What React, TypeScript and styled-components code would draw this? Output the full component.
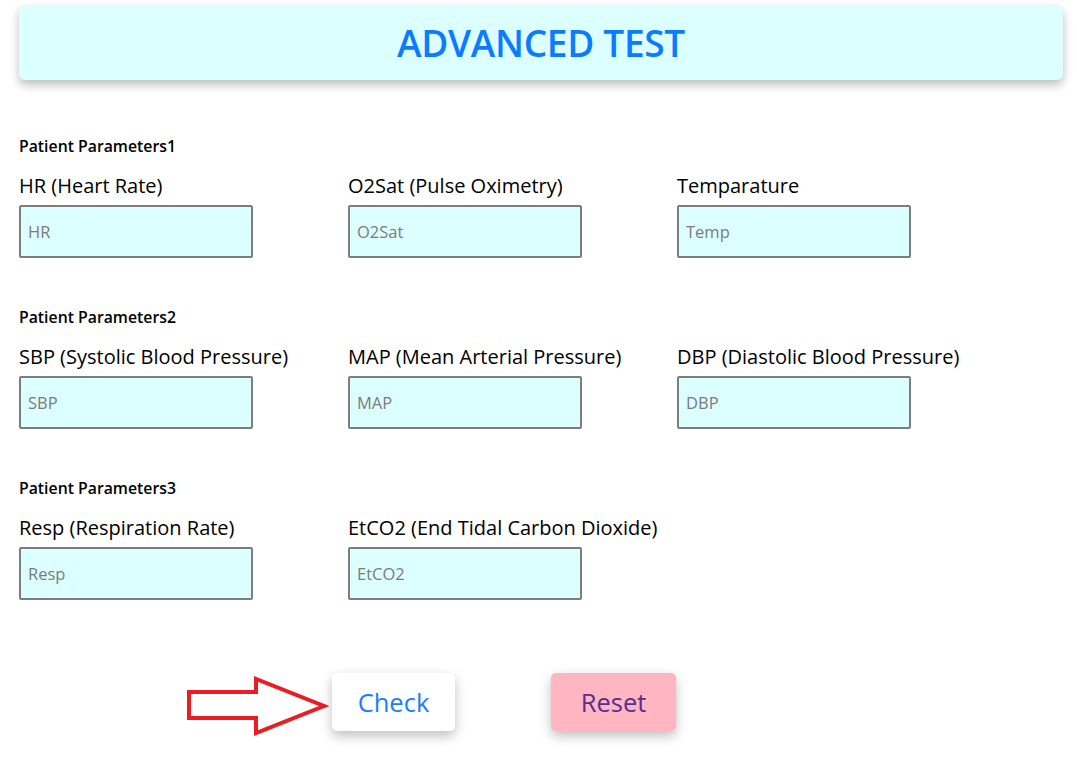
import React from 'react';
import styled, { createGlobalStyle } from 'styled-components';

const GlobalStyle = createGlobalStyle`
  html, body {
    margin: 0;
    padding: 0;
    background: #ffffff;
    font-family: "Open Sans", "Noto Sans", Arial, sans-serif;
  }
`;

const Page = styled.div`
  padding: 5px 14px 30px 19px;
`;

const Header = styled.header`
  height: 75px;
  background: #dcffff;
  border-radius: 6px;
  box-shadow: 0 5px 10px rgba(0, 0, 0, 0.25);
  display: flex;
  align-items: center;
  justify-content: center;
`;

const Title = styled.h1`
  margin: 0;
  font-size: 37px;
  font-weight: 600;
  color: #0b7bff;
  letter-spacing: -0.3px;
`;

const Section = styled.section<{ $first?: boolean }>`
  margin-top: ${(p) => (p.$first ? '56px' : '49px')};
`;

const SectionTitle = styled.div`
  font-size: 15.8px;
  line-height: 20px;
  font-weight: 600;
  color: #000;
`;

const Grid = styled.div`
  display: grid;
  grid-template-columns: repeat(3, 234px);
  column-gap: 95px;
  margin-top: 18px;
`;

const Field = styled.label`
  display: flex;
  flex-direction: column;
`;

const FieldLabel = styled.span`
  font-size: 20px;
  line-height: 24px;
  color: #000;
  white-space: nowrap;
`;

const Input = styled.input`
  box-sizing: border-box;
  width: 234px;
  height: 53px;
  margin-top: 7px;
  padding: 0 7px;
  border: 2px solid #7d7d7d;
  border-radius: 2px;
  background: #dcffff;
  font-family: inherit;
  font-size: 16.5px;
  color: #000;
  outline: none;

  &::placeholder {
    color: #7b7b7b;
  }
`;

const Actions = styled.div`
  display: flex;
  align-items: flex-start;
  margin-top: 73px;
  padding-left: 166px;
`;

const Arrow = styled.svg`
  width: 147px;
  height: 64px;
  flex-shrink: 0;
`;

const Button = styled.button<{ $variant: 'check' | 'reset' }>`
  height: 58px;
  width: ${(p) => (p.$variant === 'check' ? '123px' : '125px')};
  margin-left: ${(p) => (p.$variant === 'check' ? '0' : '96px')};
  border: none;
  border-radius: 5px;
  background: ${(p) => (p.$variant === 'check' ? '#ffffff' : '#ffb6c1')};
  color: ${(p) => (p.$variant === 'check' ? '#1a7dff' : '#5a2d91')};
  font-family: inherit;
  font-size: 25.5px;
  box-shadow: 0 5px 12px rgba(0, 0, 0, 0.25);
  cursor: pointer;
`;

type FieldDef = { label: string; placeholder: string };

const sections: { title: string; fields: FieldDef[] }[] = [
  {
    title: 'Patient Parameters1',
    fields: [
      { label: 'HR (Heart Rate)', placeholder: 'HR' },
      { label: 'O2Sat (Pulse Oximetry)', placeholder: 'O2Sat' },
      { label: 'Temparature', placeholder: 'Temp' },
    ],
  },
  {
    title: 'Patient Parameters2',
    fields: [
      { label: 'SBP (Systolic Blood Pressure)', placeholder: 'SBP' },
      { label: 'MAP (Mean Arterial Pressure)', placeholder: 'MAP' },
      { label: 'DBP (Diastolic Blood Pressure)', placeholder: 'DBP' },
    ],
  },
  {
    title: 'Patient Parameters3',
    fields: [
      { label: 'Resp (Respiration Rate)', placeholder: 'Resp' },
      { label: 'EtCO2 (End Tidal Carbon Dioxide)', placeholder: 'EtCO2' },
    ],
  },
];

const App: React.FC = () => {
  return (
    <>
      <GlobalStyle />
      <Page>
        <Header>
          <Title>ADVANCED TEST</Title>
        </Header>
        {sections.map((s, i) => (
          <Section key={s.title} $first={i === 0}>
            <SectionTitle>{s.title}</SectionTitle>
            <Grid>
              {s.fields.map((f) => (
                <Field key={f.placeholder}>
                  <FieldLabel>{f.label}</FieldLabel>
                  <Input placeholder={f.placeholder} />
                </Field>
              ))}
            </Grid>
          </Section>
        ))}
        <Actions>
          <Arrow viewBox="0 0 147 64">
            <path
              d="M4 19 H71 V6 L139 33 L71 60 V45 H4 Z"
              fill="none"
              stroke="#ec1c24"
              strokeWidth="4"
              strokeLinejoin="miter"
            />
          </Arrow>
          <Button $variant="check">Check</Button>
          <Button $variant="reset">Reset</Button>
        </Actions>
      </Page>
    </>
  );
};

export default App;
